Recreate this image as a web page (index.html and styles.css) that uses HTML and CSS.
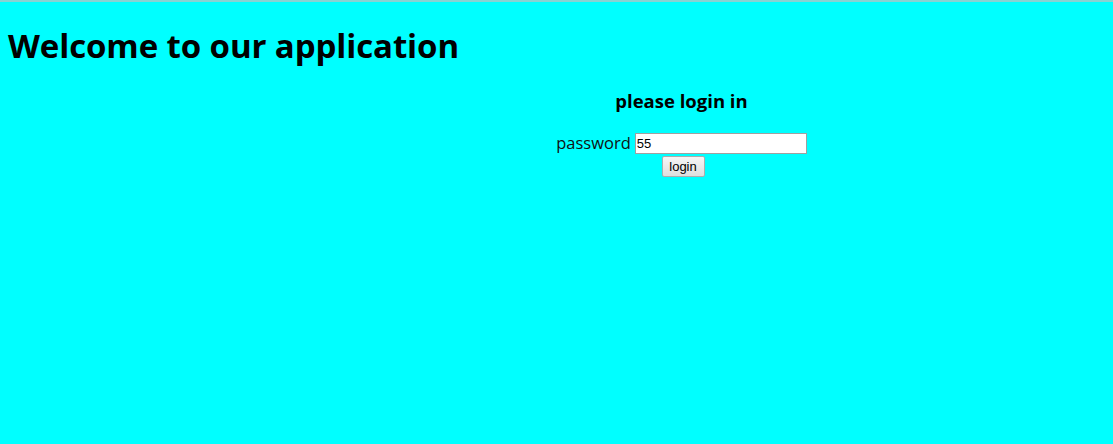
FILE: index.html
```html
<!DOCTYPE html>
<html>
<head>
<meta charset="utf-8">
<link rel="stylesheet" href="styles.css">
</head>
<body>
<div class="topline"></div>
<div class="page">
  <h1 class="title">Welcome to our application</h1>
  <div class="login">
    <h3 class="login-title">please login in</h3>
    <form class="login-form">
      <div class="row">
        <label class="label" for="pw">password</label>
        <input class="input" id="pw" type="text" value="55">
      </div>
      <div class="row">
        <button class="btn" type="button">login</button>
      </div>
    </form>
  </div>
</div>
</body>
</html>
```
FILE: styles.css
```css
html, body {
  margin: 0;
  padding: 0;
  height: 100%;
}
body {
  background: #00ffff;
  font-family: "Open Sans", "Noto Sans", "DejaVu Sans", sans-serif;
  color: #000;
}
.topline {
  height: 2px;
  background: #88d2d2;
}
.page {
  padding: 0 8px;
}
.title {
  margin: 0;
  padding-top: 22px;
  font-size: 33px;
  font-weight: 700;
  line-height: 44px;
  letter-spacing: -0.1px;
}
.login {
  padding-left: 250px;
  text-align: center;
}
.login-title {
  margin: 20px 0 0;
  font-size: 18.5px;
  font-weight: 700;
  line-height: 26px;
}
.login-form {
  margin: 18px 0 0;
}
.row {
  display: flex;
  justify-content: center;
  align-items: center;
}
.label {
  font-size: 16.5px;
  line-height: 22px;
  margin-right: 4px;
  color: #111;
}
.input {
  box-sizing: border-box;
  width: 172px;
  height: 21px;
  border: 1px solid #a0a0a0;
  background: #fff;
  font-family: "Liberation Sans", Arial, sans-serif;
  font-size: 13px;
  padding: 0 1px;
  margin: 0;
}
.btn {
  box-sizing: border-box;
  width: 43px;
  height: 21px;
  margin-top: 2px;
  margin-left: 3px;
  padding: 0;
  border: 1px solid #adadad;
  border-radius: 2px;
  background: linear-gradient(#f6f6f6, #dedede);
  font-family: "Liberation Sans", Arial, sans-serif;
  font-size: 13px;
  color: #000;
}
```
